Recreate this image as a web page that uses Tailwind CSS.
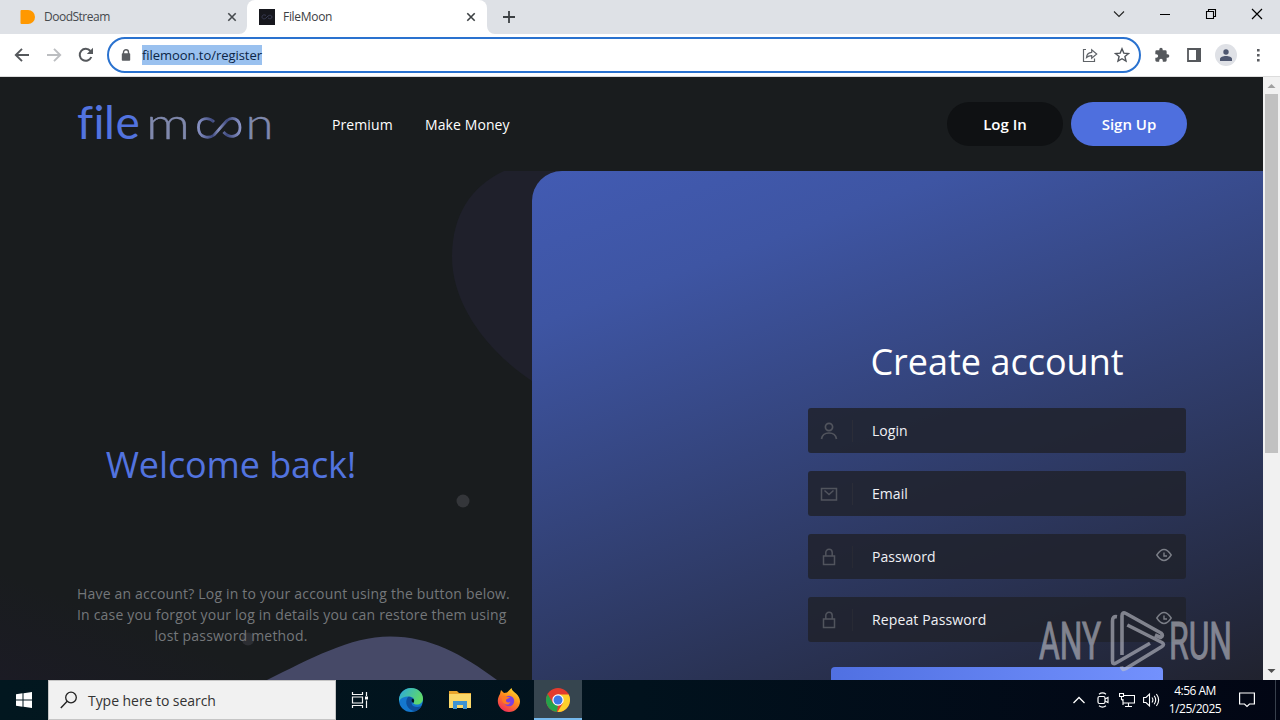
<!DOCTYPE html>
<html lang="en">
<head>
<meta charset="utf-8">
<title>FileMoon</title>
<script src="https://cdn.jsdelivr.net/npm/@tailwindcss/browser@4"></script>
</head>
<body class="w-[1280px] h-[720px] overflow-hidden flex flex-col font-['Open_Sans',sans-serif] relative">

<!-- Tab strip -->
<div class="h-[34px] shrink-0 bg-[#dee1e6] flex items-stretch">
  <div class="w-[247px] flex items-center pl-[20px] pr-[10px]">
    <svg class="w-4 h-4 shrink-0" viewBox="0 0 16 16"><path d="M1.500 1H8a7 7 0 0 1 0 14H1.500Q.5 15 .5 14V2Q.5 1 1.500 1Z" fill="#ff9800"/></svg>
    <span class="ml-[8px] text-[12px] tracking-[-0.5px] text-[#45494d] flex-1">DoodStream</span>
    <svg class="w-[10px] h-[10px]" viewBox="0 0 10 10"><path d="M1.300 1.300l7.400 7.400M8.700 1.300L1.300 8.700" stroke="#45494d" stroke-width="1.600"/></svg>
  </div>
  <div class="relative w-[240px] bg-white rounded-t-[8px] flex items-center pl-[12px] pr-[11px]">
    <svg class="absolute -left-2 bottom-0 w-2 h-2" viewBox="0 0 8 8"><path d="M8 0v8H0A8 8 0 0 0 8 0Z" fill="#fff"/></svg>
    <svg class="absolute -right-2 bottom-0 w-2 h-2" viewBox="0 0 8 8"><path d="M0 0v8h8A8 8 0 0 1 0 0Z" fill="#fff"/></svg>
    <svg class="w-4 h-4 shrink-0" viewBox="0 0 16 16"><path d="M0 0h16v16H0Z" fill="#16171d"/><path d="M7 6.500C4.500 5 3 6.500 3 8s2 2.800 4 1l2-2c2-1.500 4-.5 4 1s-2 2.500-4 1" fill="none" stroke="#3b3e58" stroke-width=".9"/></svg>
    <span class="ml-[8px] text-[12px] tracking-[-0.3px] text-[#3c4043] flex-1">FileMoon</span>
    <svg class="w-[10px] h-[10px]" viewBox="0 0 10 10"><path d="M1.300 1.300l7.400 7.400M8.700 1.300L1.300 8.700" stroke="#3c4043" stroke-width="1.600"/></svg>
  </div>
  <div class="flex-1 flex items-center pl-[16px]">
    <svg class="w-3 h-3" viewBox="0 0 12 12"><path d="M6 0v12M0 6h12" stroke="#3c4043" stroke-width="1.800"/></svg>
  </div>
  <div class="flex items-start pt-[8px] pr-[17px] gap-[34px]">
    <svg class="w-3 h-3" viewBox="0 0 12 12"><path d="M1 3.500l5 5 5-5" fill="none" stroke="#222" stroke-width="1.100"/></svg>
    <svg class="w-3 h-3" viewBox="0 0 12 12"><path d="M1 6.500h10" stroke="#000"/></svg>
    <svg class="w-3 h-3" viewBox="0 0 12 12"><path d="M1.500 3.500h7v7h-7zM3.500 3V1.500h7v7H9" fill="none" stroke="#000" stroke-width="1.100"/></svg>
    <svg class="w-3 h-3" viewBox="0 0 12 12"><path d="M1 1l10 10M11 1L1 11" stroke="#000" stroke-width="1.200"/></svg>
  </div>
</div>

<!-- Toolbar -->
<div class="h-[43px] shrink-0 bg-white border-b border-[#dcdcdc] flex items-center">
  <div class="w-[107px] shrink-0 flex items-center pl-[14px] gap-4">
    <svg class="w-4 h-4" viewBox="0 0 16 16"><path d="M15 8H2.500M8 1.800L1.800 8 8 14.200" fill="none" stroke="#55585c" stroke-width="1.900"/></svg>
    <svg class="w-4 h-4" viewBox="0 0 16 16"><path d="M1 8h12.500M8 1.800L14.200 8 8 14.200" fill="none" stroke="#bcbec1" stroke-width="1.900"/></svg>
    <svg class="w-4 h-4" viewBox="0 0 16 16"><path d="M13.300 10A6 6 0 1 1 12.400 4" fill="none" stroke="#55585c" stroke-width="2"/><path d="M15 .8V7H8.800Z" fill="#55585c"/></svg>
  </div>
  <div class="w-[1034px] h-[36px] rounded-full border-2 border-[#2a72cf] flex items-center pl-[12px] pr-[9px]">
    <svg class="w-[10px] h-3 shrink-0" viewBox="0 0 10 12"><path d="M2.500 5V3.300a2.500 2.500 0 0 1 5 0V5" fill="none" stroke="#5a5d61" stroke-width="1.400"/><rect x=".8" y="4.300" width="8.400" height="7.500" rx=".8" fill="#5a5d61"/></svg>
    <span class="ml-[11px] h-5 leading-5 bg-[#9ac1ef] text-[13px] tracking-[-0.05px] text-[#0b2546] whitespace-nowrap">filemoon.to/register</span>
    <span class="flex-1"></span>
    <svg class="w-4 h-4" viewBox="0 0 16 16"><path d="M4 2.500H1.500v12h11V11.500M4.500 10.500c.3-3 2-5 5.200-5.200V2.700l5 4.300-5 4.300V8.600c-2.200 0-3.700.5-5.200 1.900Z" fill="none" stroke="#5f6368" stroke-width="1.200"/></svg>
    <svg class="w-4 h-4 ml-4" viewBox="0 0 16 16"><path d="M8 1.800l1.800 4.300 4.700.4-3.600 3 1.100 4.600L8 11.700l-4 2.400 1.100-4.600-3.600-3 4.700-.4Z" fill="none" stroke="#50545a" stroke-width="1.400"/></svg>
  </div>
  <div class="flex items-center ml-[13px]">
    <svg class="w-4 h-4" viewBox="0 0 24 24"><path d="M20.500 11H19V7a2 2 0 0 0-2-2h-4V3.500a2.500 2.500 0 0 0-5 0V5H4a2 2 0 0 0-2 2v3.800h1.500a2.700 2.700 0 0 1 0 5.400H2V20a2 2 0 0 0 2 2h3.800v-1.500a2.700 2.700 0 0 1 5.400 0V22H17a2 2 0 0 0 2-2v-4h1.500a2.500 2.500 0 0 0 0-5Z" fill="#55585c"/></svg>
    <svg class="w-4 h-4 ml-4" viewBox="0 0 16 16"><path d="M2 2h12v12H2z" fill="none" stroke="#55585c" stroke-width="1.800"/><path d="M10 1h5v14h-5z" fill="#55585c"/></svg>
    <div class="ml-[13px] w-[22px] h-[22px] rounded-full bg-[#dfe1e6] flex items-center justify-center"><svg class="w-3 h-3" viewBox="0 0 12 12"><circle cx="6" cy="3" r="2.700" fill="#4e5770"/><path d="M0 12V10c0-2 3-3 6-3s6 1 6 3v2Z" fill="#4e5770"/></svg></div>
    <svg class="w-4 h-4 ml-[14px]" viewBox="0 0 16 16"><path d="M6 2h2.600v2.600H6zM6 7h2.600v2.600H6zM6 12h2.600v2.600H6z" fill="#5a5d61"/></svg>
  </div>
</div>

<!-- Viewport -->
<div class="h-[603px] shrink-0 flex">
  <div class="w-[1263px] bg-[#191c1e] flex flex-col overflow-hidden">
    <header class="h-[94px] shrink-0 flex items-center pl-[77px] pr-[76px]">
      <svg class="w-[204px] h-[72px] shrink-0 font-['Lato',sans-serif]" viewBox="0 -14 204 72">
        <defs>
          <linearGradient id="inf" gradientUnits="userSpaceOnUse" x1="120" y1="0" x2="164" y2="0"><stop offset="0" stop-color="#8d97c8"/><stop offset=".35" stop-color="#3f4a80"/><stop offset=".5" stop-color="#8a93c0"/><stop offset=".68" stop-color="#3f4a80"/><stop offset="1" stop-color="#8d97c8"/></linearGradient>
        </defs>
        <text class="[font-variant-ligatures:none]" x="0 16.500 27 38.500" y="37" font-size="46" fill="#5273df">file</text>
        <text x="69" y="37" font-size="44" font-weight="300" textLength="44" lengthAdjust="spacingAndGlyphs" fill="#8089ad" stroke="#8089ad" stroke-width=".4">m</text>
        <path d="M137 20C132 15 121.500 15 121.500 25.500S132 37 137 33L150 18.500C155 14 163 17 163 25.500S154 38 146.500 30" fill="none" stroke="url(#inf)" stroke-width="2.800"/>
        <text x="168.500" y="37" font-size="44" font-weight="300" textLength="28" lengthAdjust="spacingAndGlyphs" fill="#8089ad" stroke="#8089ad" stroke-width=".4">n</text>
      </svg>
      <nav class="flex ml-[51px] gap-8 text-[14px] tracking-[0.1px] text-white">
        <span class="w-[61px] whitespace-nowrap">Premium</span><span class="whitespace-nowrap">Make Money</span>
      </nav>
      <div class="flex-1"></div>
      <div class="flex gap-2 text-[15px] font-semibold text-white">
        <div class="w-[116px] h-[44px] rounded-full bg-[#0f1113] flex items-center justify-center">Log In</div>
        <div class="w-[116px] h-[44px] rounded-full bg-[#4e6fde] flex items-center justify-center">Sign Up</div>
      </div>
    </header>
    <main class="flex-1 flex relative">
      <!-- Decorative shapes behind the columns -->
      <svg class="absolute left-0 top-0 w-[572px] h-[509px]" viewBox="0 0 572 509">
        <defs><linearGradient id="corner" x1="0" y1="1" x2=".5" y2=".5"><stop offset="0" stop-color="#1b1b24"/><stop offset="1" stop-color="#1b1b24" stop-opacity="0"/></linearGradient></defs>
        <path d="M0 400L280 509H0Z" fill="url(#corner)"/>
        <path d="M504 0C470 16 452 45 452 86C452 135 490 185 540 215L570 0Z" fill="#1f202b"/>
        <circle cx="463" cy="330" r="6.500" fill="#34363a"/>
        <circle cx="248" cy="468" r="6.500" fill="#2c2e33"/>
        <path d="M267 509C310 488 350 465.500 390 465.500C430 465.500 462 483 497 509Z" fill="#464967"/>
      </svg>
      <section class="relative w-[532px] shrink-0 pl-[77px] pt-[266px]">
        <div class="w-[308px] text-center whitespace-nowrap">
          <h1 class="text-[36px] leading-[56px] tracking-[-0.12px] text-[#5273df]">Welcome back!</h1>
          <p class="mt-[90px] text-[14px] leading-[21px] tracking-[0.19px] text-[#74777a]">Have an account? Log in to your account using the button below.<br>In case you forgot your log in details you can restore them using<br>lost password method.</p>
        </div>
      </section>
      <section class="relative flex-1 rounded-tl-[30px] bg-[linear-gradient(160deg,#425bb3_0%,#3e55a3_20%,#20222e_100%)] flex flex-col items-start pl-[276px] pt-[164px]">
        <h2 class="w-[378px] text-center text-[36px] leading-[54px] text-white">Create account</h2>
        <div class="mt-[19px] w-[378px] flex flex-col gap-[18px] text-[14px] tracking-[0.06px] text-[#f0f1f5]">
          <div class="h-[45px] rounded-[3px] bg-[#20222b]/85 flex items-center pl-[12px] pr-[14px]">
            <svg class="w-[18px] h-[18px]" viewBox="0 0 18 18"><path d="M1.500 17c.6-4 3.500-6 7.500-6s6.900 2 7.500 6" fill="none" stroke="#51545d" stroke-width="1.700"/><circle cx="9" cy="5" r="3.600" fill="none" stroke="#51545d" stroke-width="1.700"/></svg>
            <span class="ml-[14px] w-px h-[22px] bg-[#2b2d38]"></span><span class="ml-[19px] flex-1">Login</span>
          </div>
          <div class="h-[45px] rounded-[3px] bg-[#20222b]/85 flex items-center pl-[12px] pr-[14px]">
            <svg class="w-[18px] h-[18px]" viewBox="0 0 18 18"><path d="M1.500 3.500h15v11.500h-15zM4.500 5.500l4.500 4 4.500-4" fill="none" stroke="#51545d" stroke-width="1.500"/></svg>
            <span class="ml-[14px] w-px h-[22px] bg-[#2b2d38]"></span><span class="ml-[19px] flex-1">Email</span>
          </div>
          <div class="h-[45px] rounded-[3px] bg-[#20222b]/85 flex items-center pl-[12px] pr-[14px]">
            <svg class="w-[18px] h-[18px]" viewBox="0 0 18 18"><path d="M3.500 8h11v8.500h-11zM5.800 8V4.500a3.200 3.200 0 0 1 6.400 0V8" fill="none" stroke="#51545d" stroke-width="1.500"/></svg>
            <span class="ml-[14px] w-px h-[22px] bg-[#282a34]"></span><span class="ml-[19px] flex-1">Password</span>
            <svg class="w-4 h-4 -mt-1" viewBox="0 0 16 16"><path d="M.8 8Q8-3 15.200 8 8 19 .8 8ZM8 5.500V9h3" fill="none" stroke="#7b7e87" stroke-width="1.400"/></svg>
          </div>
          <div class="h-[45px] rounded-[3px] bg-[#20222b]/85 flex items-center pl-[12px] pr-[14px]">
            <svg class="w-[18px] h-[18px]" viewBox="0 0 18 18"><path d="M3.500 8h11v8.500h-11zM5.800 8V4.500a3.200 3.200 0 0 1 6.400 0V8" fill="none" stroke="#51545d" stroke-width="1.500"/></svg>
            <span class="ml-[14px] w-px h-[22px] bg-[#282a34]"></span><span class="ml-[19px] flex-1 tracking-[0.13px]">Repeat Password</span>
            <svg class="w-4 h-4 -mt-1" viewBox="0 0 16 16"><path d="M.8 8Q8-3 15.200 8 8 19 .8 8ZM8 5.500V9h3" fill="none" stroke="#7b7e87" stroke-width="1.400"/></svg>
          </div>
        </div>
        <div class="mt-[25px] ml-[23px] w-[332px] h-[13px] rounded-t-[4px] bg-linear-to-r from-[#5070e2] to-[#7391fd]"></div>
      </section>
    </main>
  </div>
  <!-- Scrollbar -->
  <div class="w-[17px] bg-[#f1f1f1] flex flex-col items-center">
    <svg class="w-[17px] h-[17px] shrink-0" viewBox="0 0 17 17"><path d="M4.500 11l4-4 4 4Z" fill="#a0a0a0"/></svg>
    <div class="w-[13px] h-[359px] bg-[#c1c1c1]"></div>
    <div class="flex-1"></div>
    <svg class="w-[17px] h-[17px] shrink-0" viewBox="0 0 17 17"><path d="M4.500 6l4 4 4-4Z" fill="#505050"/></svg>
  </div>
</div>

<!-- Taskbar -->
<div class="h-[40px] shrink-0 bg-linear-to-r from-[#02171f] via-[#01121d] to-[#020614] flex items-stretch">
  <div class="w-[48px] flex items-center justify-center"><svg class="w-4 h-4" viewBox="0 0 16 16"><path d="M0 2.300l6.500-1v6.200H0zM7.500 1.200L16 0v7.500H7.500zM0 8.500h6.500v6.200l-6.500-1zM7.500 8.500H16V16l-8.500-1.200z" fill="#fff"/></svg></div>
  <div class="w-[288px] bg-[#f1f1f1] border border-[#c5c5c5] flex items-center pl-[11px]">
    <svg class="w-[18px] h-[18px]" viewBox="0 0 18 18"><circle cx="11" cy="6.500" r="5.300" fill="none" stroke="#222" stroke-width="1.300"/><path d="M7.200 10.300L.8 17" stroke="#222" stroke-width="1.400"/></svg>
    <span class="ml-[10px] text-[14px] tracking-[-0.05px] text-[#333]">Type here to search</span>
  </div>
  <div class="w-[48px] flex items-center justify-center"><svg class="w-[18px] h-[16px]" viewBox="0 0 18 16"><path d="M1.500 0v2.500h10V0M1.500 16v-2.500h10V16M1.500 5h10v6h-10zM15.500 0v4M15.500 8.500V16" fill="none" stroke="#f5f5f5" stroke-width="1.200"/><path d="M14 4.500h3v3h-3z" fill="#fff"/></svg></div>
  <div class="w-[54px] flex items-center justify-center">
    <svg class="w-6 h-6" viewBox="0 0 24 24"><defs><linearGradient id="eg" x1="0" y1="0" x2="1" y2=".4"><stop offset="0" stop-color="#2aa9e0"/><stop offset="1" stop-color="#5fd86a"/></linearGradient></defs><circle cx="12" cy="12" r="12" fill="#1478cf"/><path d="M0 11C1 4 6 0 12 0c7 0 12 5 12 10.500 0 4-3 6-6 6-3.500 0-4-1.200-3.500-2 1.500-2 .5-6-4.500-6C5 8.500 1 10 0 14Z" fill="url(#eg)"/><path d="M9 9c-4 5-1 13 7 14.300 3-.8 5.500-3 6.500-5.300-4 2-9 1-9.800-2-.5-2 1.300-2.500 1-4.500C13 9 11 8.400 9 9Z" fill="#0e4f9c"/><path d="M14.300 15c-2-1-2.300-4-.3-4.500 1.500 1 1.500 3 .3 4.500Z" fill="#02131e"/></svg>
  </div>
  <div class="w-[44px] flex items-center justify-center"><svg class="w-[22px] h-5" viewBox="0 0 22 20"><path d="M0 1h8l2 2h12v15H0z" fill="#e9a52c"/><path d="M0 4h22v14H0z" fill="#fbd869"/><path d="M4 11h14v8h-4v-4H8v4H4z" fill="#3e93d2"/></svg></div>
  <div class="w-[52px] pl-[2px] flex items-center justify-center"><svg class="w-6 h-6" viewBox="0 0 24 24"><defs><linearGradient id="ff" x1=".8" y1="0" x2=".2" y2="1"><stop offset="0" stop-color="#ffe02e"/><stop offset=".45" stop-color="#ff8a1c"/><stop offset="1" stop-color="#f0245f"/></linearGradient></defs><path d="M3 6l1-4 3 3 3-.5L14.500 0c.5 3 3 4 4.500 5.500 2.500 2.500 4 4.500 4 8C23 19 18 24 12 24S.8 19 .8 13C.8 10 1.800 8 3 6Z" fill="url(#ff)"/><circle cx="12" cy="13" r="5.200" fill="#7a3fe0"/><path d="M5 8c3-.5 5 1 8 1-1 2-4 1.500-4 3.500s2.500 2.500 4.500 1.500C12 18 6 17 5 12Z" fill="#ff7a22"/></svg></div>
  <div class="w-[48px] bg-[#36454f] border-b-2 border-[#76b9ed] flex items-center justify-center pt-[2px]">
    <svg class="w-6 h-6" viewBox="0 0 24 24"><circle cx="12" cy="12" r="12" fill="#e33b2e"/><path d="M1.600 6L7 15.200 12 17.500 10.800 24A12 12 0 0 1 1.600 6Z" fill="#25a34a"/><path d="M12 6.500h10.700A12 12 0 0 1 11.500 24L17 15Z" fill="#fdd12b"/><circle cx="12" cy="12" r="5.700" fill="#fff"/><circle cx="12" cy="12" r="4.500" fill="#3b78e7"/></svg>
  </div>
  <div class="flex-1"></div>
  <div class="flex items-center text-white">
    <svg class="w-3 h-2" viewBox="0 0 12 8"><path d="M.5 7L6 1.500 11.500 7" fill="none" stroke="#fff" stroke-width="1.300"/></svg>
    <svg class="ml-[12px] w-3 h-4" viewBox="0 0 12 16"><rect x="1" y="4.500" width="7" height="7" rx="1.500" fill="none" stroke="#fff" stroke-width="1.200"/><path d="M8 7l3-1.500v5L8 9M2 2.200Q5.500-.5 9 2.200M2 13.800q3.500 2.700 7 0" fill="none" stroke="#fff" stroke-width="1.100"/></svg>
    <svg class="ml-[10px] w-4 h-4" viewBox="0 0 16 16"><path d="M5 3.500h10.500v7.500H4V7M9.500 11v3M6 14.500h7M.5 1.500h4v3h-4zM2.500 4.500v3l1.500 1V13" fill="none" stroke="#fff" stroke-width="1.100"/></svg>
    <svg class="ml-[8px] w-[17px] h-4" viewBox="0 0 17 16"><path d="M.6 5.500H3L6.500 2v12L3 10.500H.6ZM9 5.500q1.800 2.500 0 5M11.200 3.800q3 4.200 0 8.400M13.400 2q4.500 6 0 12" fill="none" stroke="#fff" stroke-width="1.100"/></svg>
    <div class="w-[70px] text-center text-[12px] leading-[18px] tracking-[-0.5px] whitespace-nowrap">4:56 AM<br>1/25/2025</div>
    <svg class="ml-[9px] w-4 h-4" viewBox="0 0 16 16"><path d="M.6 1h14.800v11H10.500L8 14.500 5.500 12H.6Z" fill="none" stroke="#fff" stroke-width="1.200"/></svg>
    <span class="ml-[20px] mr-[4px] w-px h-10 bg-[#38404c]"></span>
  </div>
</div>

<!-- Watermark overlay -->
<svg class="absolute left-[1036px] top-[600px] w-[220px] h-[80px] overflow-visible font-['Roboto',sans-serif]" viewBox="0 -6 220 80">
  <g opacity=".6" fill="#c2c4cd">
    <text x="3" y="53" font-size="52" textLength="62" lengthAdjust="spacingAndGlyphs" stroke="#c2c4cd" stroke-width="1">ANY</text>
    <text x="133" y="53" font-size="52" textLength="63" lengthAdjust="spacingAndGlyphs" stroke="#c2c4cd" stroke-width="1">RUN</text>
    <path d="M81 10.700Q76.500 10 76.500 15V55Q76.500 59 80 57L114 37.300M86 49V10Q86 5.500 90 7.500L125 27Q128 29.500 124.700 31.500L91.300 19M91.300 19L126 36.500Q129 38.500 126 40.500L90 62.500Q86 65 85.500 60.500" fill="none" stroke="none"/>
    <path d="M81 10.700Q76.500 10 76.500 15V55Q76.500 59 80 57L114 37.300M86 49V10Q86 5.500 90 7.500L125 27Q128 29.500 124.700 31.500L119 29M91.300 19L126 36.500Q129 38.500 126 40.500L90 62.500Q86 65 85.500 60.500" fill="none" stroke="#c2c4cd" stroke-width="3.600" stroke-linejoin="round"/>
  </g>
</svg>
</body>
</html>
